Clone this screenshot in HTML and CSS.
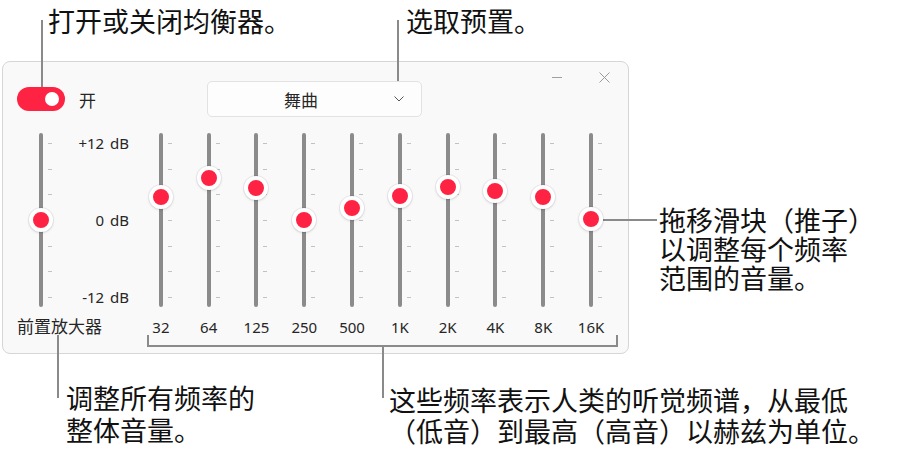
FILE: index.html
```html
<!DOCTYPE html>
<html lang="zh-CN">
<head>
  <meta charset="UTF-8" />
  <meta name="viewport" content="width=device-width, initial-scale=1.0" />
  <title>均衡器</title>
  <link rel="stylesheet" href="styles.css">
</head>
<body>
  <div class="figure">
    <div class="eq-window">
      <div class="win-controls">
        <span class="win-min"></span>
        <svg class="win-close" width="11" height="11" viewBox="0 0 11 11">
          <path d="M0.5 0.5 L10.5 10.5 M10.5 0.5 L0.5 10.5" stroke="#9a9a9a" stroke-width="1" fill="none" />
        </svg>
      </div>

      <div class="eq-header">
        <div class="switch">
          <span class="switch-track"><span class="switch-knob"></span></span>
          <span class="switch-label">开</span>
        </div>
        <div class="preset">
          <span class="preset-name">舞曲</span>
          <svg class="chevron" width="10" height="6" viewBox="0 0 10 6">
            <path d="M0.5 0.5 L5 5 L9.5 0.5" stroke="#555" stroke-width="1" fill="none" />
          </svg>
        </div>
      </div>

      <div class="eq-bands" id="bands"></div>
    </div>

    <!-- 说明文字和引线 -->
    <div class="note note-switch">打开或关闭均衡器。</div>
    <div class="note note-preset">选取预置。</div>
    <div class="note note-slider">
      <div>拖移滑块（推子）</div>
      <div>以调整每个频率</div>
      <div>范围的音量。</div>
    </div>
    <div class="note note-preamp">
      <div>调整所有频率的</div>
      <div>整体音量。</div>
    </div>
    <div class="note note-freq">
      <div>这些频率表示人类的听觉频谱，从最低</div>
      <div>（低音）到最高（高音）以赫兹为单位。</div>
    </div>

    <span class="lead lead-switch"></span>
    <span class="lead lead-preset"></span>
    <span class="lead lead-slider"></span>
    <span class="lead lead-preamp"></span>
    <span class="bracket"></span>
    <span class="lead lead-freq"></span>
  </div>

  <script>
    // 增益，单位 dB（-12 ~ +12）
    const preamp = 0;
    const bandas = [
      { freq: '32', gain: 3.6 },
      { freq: '64', gain: 6.5 },
      { freq: '125', gain: 5.0 },
      { freq: '250', gain: 0 },
      { freq: '500', gain: 1.9 },
      { freq: '1K', gain: 3.7 },
      { freq: '2K', gain: 5.1 },
      { freq: '4K', gain: 4.5 },
      { freq: '8K', gain: 3.6 },
      { freq: '16K', gain: 0.1 }
    ];

    const PX_POR_DB = 6.42;
    const ZERO = 87;

    function slider(gain) {
      const y = (ZERO - gain * PX_POR_DB).toFixed(1);
      return `<div class="slider"><div class="track"><span class="knob" style="top:${y}px"></span></div></div>`;
    }

    const grid = document.getElementById('bands');
    let html = slider(preamp);
    html += `<div class="db-scale"><span>+12 dB</span><span>0 dB</span><span>-12 dB</span></div>`;
    bandas.forEach(b => html += slider(b.gain));
    html += `<div class="band-label preamp-label">前置放大器</div>`;
    bandas.forEach(b => html += `<div class="band-label">${b.freq}</div>`);
    grid.innerHTML = html;
  </script>
</body>
</html>
```

FILE: styles.css
```css
:root {
  --red: #fe2342;
  --track: #8b8b8b;
  --lead: #8a8a8a;
  --win-bg: #f9f9f9;
  --text: #262626;
}

* {
  box-sizing: border-box;
}

body {
  margin: 0;
  background: #fff;
  font-family: "Noto Sans", "Noto Sans CJK SC", sans-serif;
  color: var(--text);
}

.figure {
  position: relative;
  width: 920px;
  height: 452px;
  padding: 61px 0 0 2px;
  overflow: hidden;
}

/* 均衡器窗口 */
.eq-window {
  position: relative;
  width: 627px;
  height: 293px;
  background: var(--win-bg);
  border: 1px solid #d6d6d6;
  border-radius: 8px;
  padding: 19px 0 0 14px;
}

.win-controls {
  position: absolute;
  top: 10px;
  left: 549px;
  display: flex;
  align-items: center;
  gap: 37px;
  height: 11px;
}

.win-min {
  width: 10px;
  height: 1px;
  background: #a0a0a0;
}

.eq-header {
  display: flex;
  align-items: center;
  height: 36px;
}

.switch {
  width: 190px;
  display: flex;
  align-items: center;
  gap: 14px;
}

.switch-track {
  width: 48px;
  height: 24px;
  border-radius: 12px;
  background: var(--red);
  display: flex;
  align-items: center;
  justify-content: flex-end;
  padding-right: 6px;
}

.switch-knob {
  width: 14px;
  height: 14px;
  border-radius: 50%;
  background: #fff;
}

.switch-label {
  font-size: 17px;
}

.preset {
  width: 215px;
  height: 36px;
  display: flex;
  align-items: center;
  background: #fdfdfd;
  border: 1px solid #e2e2e2;
  border-radius: 5px;
  padding-right: 17px;
}

.preset-name {
  flex: 1;
  text-align: center;
  font-size: 17px;
}

/* 推子 */
.eq-bands {
  display: grid;
  grid-template-columns: 48px 72px repeat(10, 47.8px);
  grid-template-rows: 174px 20px;
  row-gap: 10px;
  margin-top: 16px;
}

.slider {
  display: flex;
  justify-content: center;
}

.track {
  position: relative;
  width: 4px;
  height: 100%;
  border-radius: 2px;
  background: var(--track);
}

.track::after {
  content: "";
  position: absolute;
  left: 9px;
  top: 10px;
  width: 4px;
  height: 155px;
  background: repeating-linear-gradient(to bottom, #c2c2c2 0 1px, transparent 1px 25.67px);
}

.knob {
  position: absolute;
  left: 50%;
  width: 24px;
  height: 24px;
  border-radius: 50%;
  background: var(--red);
  border: 4px solid #fff;
  box-shadow: 0 0 0 1px rgba(0, 0, 0, 0.05), 0 1px 3px rgba(0, 0, 0, 0.12);
  transform: translate(-50%, -50%);
  z-index: 1;
}

.db-scale {
  display: flex;
  flex-direction: column;
  justify-content: space-between;
  align-items: flex-end;
  padding-right: 8px;
  font-size: 15px;
  line-height: 20px;
  word-spacing: 2px;
  white-space: nowrap;
}

.band-label {
  text-align: center;
  font-size: 15px;
  line-height: 20px;
}

.preamp-label {
  grid-column: 1 / span 2;
  text-align: left;
  font-size: 17px;
  white-space: nowrap;
}

/* 说明 */
.note {
  position: absolute;
  font-family: "Noto Sans CJK SC", sans-serif;
  font-size: 27px;
  line-height: 30px;
  color: #111;
  white-space: nowrap;
}

.note-switch { left: 48px; top: 6px; }
.note-preset { left: 406px; top: 6px; }
.note-slider { left: 659px; top: 205px; line-height: 29px; }
.note-preamp { left: 66px; top: 382px; line-height: 32px; }
.note-freq { left: 389px; top: 384px; line-height: 31px; }

.lead {
  position: absolute;
  background: var(--lead);
}

.lead-switch { left: 41px; top: 20px; width: 2px; height: 67px; }
.lead-preset { left: 397px; top: 20px; width: 2px; height: 61px; }
.lead-slider { left: 603px; top: 219px; width: 54px; height: 2px; }
.lead-preamp { left: 57px; top: 335px; width: 2px; height: 63px; }
.lead-freq { left: 382px; top: 346px; width: 2px; height: 52px; }

.bracket {
  position: absolute;
  left: 147px;
  top: 335px;
  width: 471px;
  height: 12px;
  border: 2px solid var(--lead);
  border-top: none;
}
```
